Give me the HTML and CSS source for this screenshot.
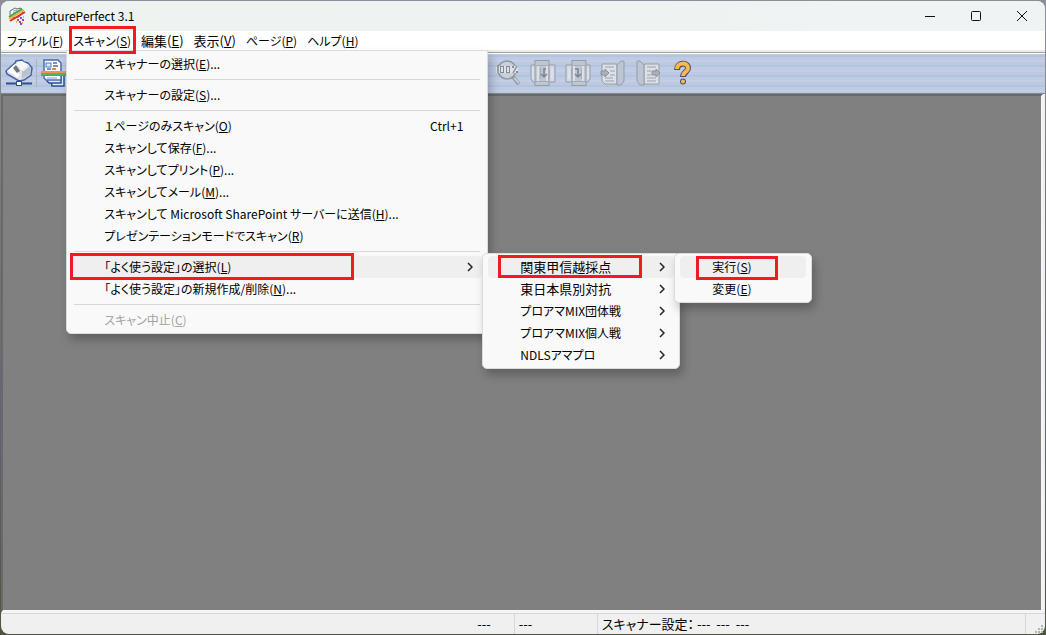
FILE: index.html
```
<!DOCTYPE html>
<html lang="ja">
<head>
    <meta charset="UTF-8">
    <meta name="viewport" content="width=device-width, initial-scale=1.0">
    <title>CapturePerfect 3.1</title>
    <link rel="stylesheet" href="styles.css">
</head>
<body>
    <div class="window">
        <header class="titlebar">
            <svg class="app-icon" width="18" height="18" viewBox="0 0 18 18">
                <path d="M2 4l5-3 2 1 4-1 2 4-4 5-7 1-2-3z" fill="#f2f4f4" stroke="#5c7075"/>
                <path d="M5 4l5-1M5 6l6-2" stroke="#9aa8ac"/>
                <path d="M1 10L14 2" stroke="#36a35a" stroke-width="2"/>
                <path d="M1 12L16 3" stroke="#f0b030" stroke-width="2"/>
                <path d="M2 14L17 5" stroke="#e02c2c" stroke-width="2"/>
                <path d="M9 13h2M12 11h2M11 15h2M14 13h2M12 17h2" stroke="#a43bc4" stroke-width="2"/>
                <path d="M8 15h1M14 16h1M15 10h1" stroke="#e8b820" stroke-width="2"/>
            </svg>
            <h1>CapturePerfect 3.1</h1>
            <div class="window-buttons">
                <button type="button" aria-label="最小化">
                    <svg width="10" height="10" viewBox="0 0 10 10"><path d="M0 5.5h10"/></svg>
                </button>
                <button type="button" aria-label="最大化">
                    <svg width="10" height="10" viewBox="0 0 10 10"><rect x=".5" y=".5" width="9" height="9" rx="1"/></svg>
                </button>
                <button type="button" aria-label="閉じる">
                    <svg width="10" height="10" viewBox="0 0 10 10"><path d="M0 0l10 10M10 0L0 10"/></svg>
                </button>
            </div>
        </header>

        <nav>
            <ul class="menubar">
                <li><button type="button">ファイル(<u>F</u>)</button></li>
                <li class="open">
                    <button type="button" class="marked marked-top">スキャン(<u>S</u>)</button>
                    <ul class="menu menu-scan">
                        <li><button type="button">スキャナーの選択(<u>E</u>)...</button></li>
                        <li class="separator"></li>
                        <li><button type="button">スキャナーの設定(<u>S</u>)...</button></li>
                        <li class="separator"></li>
                        <li><button type="button">１ページのみスキャン(<u>O</u>)<kbd>Ctrl+1</kbd></button></li>
                        <li><button type="button">スキャンして保存(<u>F</u>)...</button></li>
                        <li><button type="button">スキャンしてプリント(<u>P</u>)...</button></li>
                        <li><button type="button">スキャンしてメール(<u>M</u>)...</button></li>
                        <li><button type="button">スキャンして Microsoft SharePoint サーバーに送信(<u>H</u>)...</button></li>
                        <li><button type="button">プレゼンテーションモードでスキャン(<u>R</u>)</button></li>
                        <li class="separator"></li>
                        <li>
                            <button type="button" class="active marked marked-favorite">「よく使う設定」の選択(<u>L</u>)<svg class="arrow" width="6" height="10" viewBox="0 0 6 10"><path d="M1 1l4 4-4 4"/></svg></button>
                            <ul class="menu menu-favorite">
                                <li>
                                    <button type="button" class="kanji active marked marked-job">関東甲信越採点<svg class="arrow" width="6" height="10" viewBox="0 0 6 10"><path d="M1 1l4 4-4 4"/></svg></button>
                                    <ul class="menu menu-job">
                                        <li><button type="button" class="active marked marked-run">実行(<u>S</u>)</button></li>
                                        <li><button type="button">変更(<u>E</u>)</button></li>
                                    </ul>
                                </li>
                                <li><button type="button" class="kanji">東日本県別対抗<svg class="arrow" width="6" height="10" viewBox="0 0 6 10"><path d="M1 1l4 4-4 4"/></svg></button></li>
                                <li><button type="button">プロアマMIX団体戦<svg class="arrow" width="6" height="10" viewBox="0 0 6 10"><path d="M1 1l4 4-4 4"/></svg></button></li>
                                <li><button type="button">プロアマMIX個人戦<svg class="arrow" width="6" height="10" viewBox="0 0 6 10"><path d="M1 1l4 4-4 4"/></svg></button></li>
                                <li><button type="button">NDLSアマプロ<svg class="arrow" width="6" height="10" viewBox="0 0 6 10"><path d="M1 1l4 4-4 4"/></svg></button></li>
                            </ul>
                        </li>
                        <li><button type="button">「よく使う設定」の新規作成/削除(<u>N</u>)...</button></li>
                        <li class="separator"></li>
                        <li><button type="button" disabled>スキャン中止(<u>C</u>)</button></li>
                    </ul>
                </li>
                <li><button type="button" class="kanji">編集(<u>E</u>)</button></li>
                <li><button type="button" class="kanji">表示(<u>V</u>)</button></li>
                <li><button type="button">ページ(<u>P</u>)</button></li>
                <li><button type="button">ヘルプ(<u>H</u>)</button></li>
            </ul>
        </nav>

        <div class="toolbar">
            <div class="tools">
                <button type="button" aria-label="スキャナー">
                    <svg width="28" height="28" viewBox="0 0 28 28">
                        <path d="M1 12l9-8 1-2 6-1 2 2 4 1 4 5-1 7-7 5-5 1-12-7z" fill="#dfe3e8" stroke="#3f62a6" stroke-width="1.5"/>
                        <path d="M2 12l8-7 3 1-5 9z" fill="#fff"/>
                        <path d="M5 12l4-4 6 8-3 3z" fill="#fafbfc"/>
                        <path d="M8 9l3-3 4 6-3 2z" fill="#6f777c"/>
                        <path d="M12 3l5-1 7 4-7 6-5-6z" fill="#f4f6f8"/>
                        <path d="M17 12l7-6 2 4-1 5-8 5z" fill="#b9c2cd"/>
                        <path d="M18 12l6-5" stroke="#fff"/>
                        <path d="M14 21v2M1 24.500h26" stroke="#2e4f93" stroke-width="2"/>
                        <rect x="11.500" y="22.500" width="5" height="4" fill="#fff" stroke="#2e4f93"/>
                    </svg>
                </button>
                <span class="divider"></span>
                <button type="button" aria-label="ページスキャン">
                    <svg width="28" height="28" viewBox="0 0 28 28">
                        <path d="M10 16h14v11H12z" fill="#e6ebf5" stroke="#2e4f93" stroke-width="1.5"/>
                        <path d="M7 14h14v10H9l-2-2z" fill="#e6ebf5" stroke="#2e4f93" stroke-width="1.5"/>
                        <path d="M4 1h14l3 3v17H6l-2-2z" fill="#fff" stroke="#4a6cae" stroke-width="1.5"/>
                        <rect x="6" y="4" width="5" height="4" fill="#d5e8fa" stroke="#4480c0"/>
                        <path d="M13 4h4M13 7h5M7 10h4" stroke="#4470b4" stroke-width="1.5"/>
                        <path d="M12 10h4" stroke="#f08030" stroke-width="2"/>
                        <path d="M1 13h27" stroke="#f0925a" stroke-width="2"/>
                        <path d="M1 15h27" stroke="#50b464" stroke-width="2"/>
                        <path d="M1 16.500h27" stroke="#4096c8"/>
                        <path d="M7 19h10" stroke="#7c9bd0"/>
                    </svg>
                </button>
            </div>
            <div class="tools tools-view">
                <button type="button" aria-label="100%表示" disabled>
                    <svg width="26" height="26" viewBox="0 0 26 26">
                        <circle cx="12" cy="10" r="9" fill="#c9d0dc" stroke="#9298a2" stroke-width="1.500"/>
                        <path d="M18 17l6 7" stroke="#9298a2" stroke-width="4"/>
                        <path d="M19 18l5 5" stroke="#c6ccd8" stroke-width="2"/>
                        <rect x="1" y="6" width="22" height="7" fill="#dfe3e9"/>
                        <path d="M2 7l1-1v7M22 6l-4 7" fill="none" stroke="#858b95" stroke-width="1.500"/>
                        <rect x="5.500" y="6.500" width="3" height="6" fill="none" stroke="#858b95"/>
                        <rect x="11.500" y="6.500" width="3" height="6" fill="none" stroke="#858b95"/>
                        <path d="M17 7h2M21 12h2" stroke="#858b95" stroke-width="2"/>
                    </svg>
                </button>
                <button type="button" aria-label="左回転" disabled>
                    <svg width="26" height="26" viewBox="0 0 26 26">
                        <path d="M1 5h24v17H3l-2-3z" fill="#d2d8e2" stroke="#969ca6"/>
                        <rect x="5" y=".5" width="14" height="25" fill="#bec6d4" stroke="#969ca6"/>
                        <path d="M8 6v15M17 6v15M22 8v11M3 8v11" stroke="#dde1e7" stroke-width="2"/>
                        <path d="M5 5.500h14M5 21.500h14M10.500 8v11M19.500 8v11" stroke="#a6adb8"/>
                        <path d="M16 9h-2v7M11 14l3 3 3-3" fill="none" stroke="#7d848e" stroke-width="1.500"/>
                    </svg>
                </button>
                <button type="button" aria-label="右回転" disabled>
                    <svg width="26" height="26" viewBox="0 0 26 26">
                        <path d="M1 5h24v14l-2 3H1z" fill="#d2d8e2" stroke="#969ca6"/>
                        <rect x="7" y=".5" width="14" height="25" fill="#bec6d4" stroke="#969ca6"/>
                        <path d="M9 6v15M18 6v15M4 8v11M23 8v11" stroke="#dde1e7" stroke-width="2"/>
                        <path d="M7 5.500h14M7 21.500h14M6.500 8v11M16.500 8v11" stroke="#a6adb8"/>
                        <path d="M10 9h3v7M10 14l3 3 3-3" fill="none" stroke="#7d848e" stroke-width="1.500"/>
                    </svg>
                </button>
                <button type="button" aria-label="前のページ" disabled>
                    <svg width="26" height="26" viewBox="0 0 26 26">
                        <path d="M2 4h15v20H5l-3-3z" fill="#dce0e7" stroke="#969ca6"/>
                        <path d="M17 22V5l4-4h3v20l-3 4h-4z" fill="#bcc5d4" stroke="#969ca6"/>
                        <path d="M5 7h9M10 11h5M10 15h5M5 18h8M5 21h9" stroke="#9ba1ab"/>
                        <path d="M1 11h4V9l4 4-4 4v-2H1z" fill="#a9b0bb" stroke="#8b919b"/>
                    </svg>
                </button>
                <button type="button" aria-label="次のページ" disabled>
                    <svg width="26" height="26" viewBox="0 0 26 26">
                        <path d="M9 4h15v20H9z" fill="#dce0e7" stroke="#969ca6"/>
                        <path d="M9 24V5L5 1H2v20l3 4h4z" fill="#bcc5d4" stroke="#969ca6"/>
                        <path d="M12 7h9M12 11h4M12 15h4M12 18h9M12 21h9" stroke="#9ba1ab"/>
                        <path d="M17 11h4V9l4 4-4 4v-2h-4z" fill="#a9b0bb" stroke="#8b919b"/>
                    </svg>
                </button>
                <button type="button" aria-label="ヘルプ">
                    <svg width="26" height="26" viewBox="0 0 26 26" fill="none">
                        <path d="M7 10c0-8 11-8 11-2 0 4-5 4-5 9" stroke="#4a5368" stroke-width="6"/>
                        <circle cx="13" cy="21.500" r="3" fill="#4a5368"/>
                        <path d="M7 9c0-7 11-7 11-1 0 4-5 4-5 8" stroke="#fdb94c" stroke-width="4"/>
                        <circle cx="13" cy="21.500" r="2" fill="#fdb94c"/>
                    </svg>
                </button>
            </div>
        </div>

        <main class="workspace"></main>

        <footer class="statusbar">
            <span class="status-page">---</span>
            <span class="status-size">---</span>
            <span class="status-scanner">スキャナー設定：&nbsp;---&nbsp; ---&nbsp; ---</span>
            <span class="status-grip">
                <svg width="8" height="8" viewBox="0 0 8 8" fill="#b4b4b4">
                    <path d="M6 0h2v2H6zM3 3h2v2H3zM6 3h2v2H6zM0 6h2v2H0zM3 6h2v2H3zM6 6h2v2H6z"/>
                </svg>
            </span>
        </footer>
    </div>
</body>
</html>
```
FILE: styles.css
```
* {
    box-sizing: border-box;
}

body {
    margin: 0;
    height: 100vh;
    padding: 1px;
    display: flex;
    background: linear-gradient(#8c8e98, #777c78 30%, #5d6470 70%, #4d5540);
    font-family: "Noto Sans CJK JP", "Noto Sans", sans-serif;
    font-size: 12px;
    font-feature-settings: "palt";
    color: #000;
}

button {
    font: inherit;
    font-feature-settings: inherit;
    color: inherit;
    background: none;
    border: 0;
    padding: 0;
    white-space: nowrap;
}

ul {
    list-style: none;
    margin: 0;
    padding: 0;
}

.window {
    flex: 1;
    display: flex;
    flex-direction: column;
    border-radius: 8px;
    background: #f0f0f0;
}

/* title bar */
.titlebar {
    display: flex;
    align-items: center;
    height: 30px;
    padding-left: 7px;
    gap: 5px;
    border-radius: 8px 8px 0 0;
    background: linear-gradient(90deg, #edf3ef, #eff3f4);
}

.titlebar h1 {
    flex: 1;
    margin: 0;
    padding-bottom: 2px;
    font-size: 12px;
    font-weight: normal;
}

.window-buttons {
    display: flex;
    height: 100%;
}

.window-buttons button {
    display: flex;
    align-items: center;
    justify-content: center;
    width: 46px;
}

.window-buttons svg {
    fill: none;
    stroke: #111;
}

/* menus */
.menubar {
    display: flex;
    height: 19px;
    padding-left: 1px;
    background: #fff;
}

.menubar > li > button {
    height: 20px;
    padding: 0 5px;
    line-height: 20px;
}

.open {
    position: relative;
}

.menu {
    position: absolute;
    z-index: 1;
    padding: 2px 5px;
    border: 1px solid #dcdcdc;
    border-radius: 5px;
    background: #f9f9f9;
    box-shadow: 3px 6px 10px rgba(0, 0, 0, 0.25);
}

.menu > li {
    position: relative;
}

.menu button {
    display: flex;
    align-items: center;
    width: 100%;
    height: 22px;
    padding: 0 9px 0 32px;
    border-radius: 4px;
    line-height: 20px;
}

.menu button:disabled {
    color: #a3a3a3;
}

.kanji {
    font-size: 13px;
}

.menu .active {
    background: #efefef;
}

.menu .separator {
    height: 1px;
    margin: 4px 2px;
    background: #d7d7d7;
}

.menu kbd {
    margin-left: auto;
    padding-right: 10px;
    font: inherit;
}

.arrow {
    margin-left: auto;
    fill: none;
    stroke: #222;
    stroke-width: 1.5;
}

.menu-scan {
    top: 100%;
    left: -2px;
    width: 422px;
    border-radius: 0 0 5px 5px;
}

.menu-favorite {
    top: -3px;
    left: 100%;
    width: 198px;
}

.menu-job {
    top: -3px;
    left: 100%;
    width: 138px;
}

/* red frames round the commands to choose */
.marked {
    position: relative;
}

.marked::after {
    content: "";
    position: absolute;
    z-index: 2;
    border: 3px solid #ed1c24;
}

.marked-top::after {
    inset: -5px 0 -3px 1px;
}

.marked-favorite::after {
    inset: -3px 128px -2px -2px;
}

.marked-job::after {
    inset: -1px 32px 0 10px;
}

.marked-run::after {
    inset: 0 28px -2px 16px;
}

/* toolbar */
.toolbar {
    display: flex;
    align-items: center;
    height: 44px;
    padding-left: 4px;
    border-top: 2px solid #ececec;
    border-bottom: 1px solid #85888d;
    box-shadow: inset 0 1px #a0a0a0, inset 0 2px #fff;
    background: repeating-linear-gradient(#bccae1 0 3px, #b3c4de 3px 5px, #bfcbe4 5px 8px, #c3cde5 8px 10px);
}

.tools {
    display: flex;
    align-items: center;
    gap: 3px;
}

.tools-view {
    gap: 9px;
    margin-left: 427px;
}

.tools button {
    display: flex;
}

.divider {
    width: 1px;
    height: 28px;
    background: #a6b4cd;
}

.workspace {
    flex: 1;
    margin-right: 2px;
    border: 2px solid #696969;
    border-right-color: #f6f6f6;
    border-bottom: 3px solid #f6f6f6;
    background: #808080;
}

/* status bar */
.statusbar {
    display: grid;
    grid-template-columns: 6fr 83px 5fr 19px;
    height: 21px;
    border-top: 1px solid #d7d7d7;
    font-size: 13px;
    line-height: 20px;
}

.statusbar span {
    border-right: 1px solid #d7d7d7;
}

.statusbar .status-page {
    padding-right: 23px;
    text-align: right;
}

.statusbar .status-size,
.statusbar .status-scanner {
    padding-left: 4px;
}

.statusbar .status-grip {
    display: flex;
    align-items: flex-end;
    justify-content: flex-end;
    padding: 0 2px 1px 0;
    border: 0;
}
```
